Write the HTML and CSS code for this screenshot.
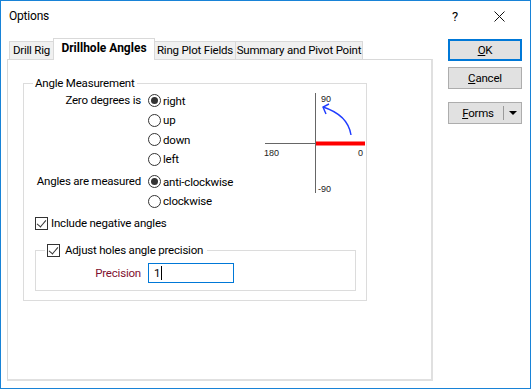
FILE: index.html
```html
<!DOCTYPE html>
<html lang="en">

<head>
    <meta charset="UTF-8">
    <title>Options</title>
    <link rel="stylesheet" href="styles.css">
</head>

<body>
    <div class="window">
        <div class="titlebar">
            <span class="title">Options</span>
            <span class="help">?</span>
            <svg class="close" width="11" height="11" viewBox="0 0 11 11">
                <path d="M0.5 0.5 L10.5 10.5 M10.5 0.5 L0.5 10.5" stroke="#111" stroke-width="1" fill="none" />
            </svg>
        </div>

        <div class="content">
            <div class="tabs">
                <div class="tabstrip">
                    <span class="tab tab-rig">Drill Rig</span>
                    <span class="tab tab-angles active">Drillhole Angles</span>
                    <span class="tab tab-ring">Ring Plot Fields</span>
                    <span class="tab tab-summary">Summary and Pivot Point</span>
                </div>

                <div class="panel">
                    <fieldset class="group">
                        <legend>Angle Measurement</legend>

                        <div class="measure">
                            <div class="options">
                                <div class="row">
                                    <span class="label">Zero degrees is</span>
                                    <div class="radios">
                                        <div class="radio checked"><span class="dot"></span>right</div>
                                        <div class="radio"><span class="dot"></span>up</div>
                                        <div class="radio"><span class="dot"></span>down</div>
                                        <div class="radio"><span class="dot"></span>left</div>
                                    </div>
                                </div>
                                <div class="row second">
                                    <span class="label">Angles are measured</span>
                                    <div class="radios">
                                        <div class="radio checked"><span class="dot"></span>anti-clockwise</div>
                                        <div class="radio"><span class="dot"></span>clockwise</div>
                                    </div>
                                </div>
                            </div>

                            <!-- angle diagram -->
                            <svg class="diagram" width="110" height="110" viewBox="0 0 110 110">
                                <line x1="59.5" y1="5" x2="59.5" y2="105" stroke="#666" stroke-width="1" />
                                <line x1="9" y1="55.5" x2="109" y2="55.5" stroke="#666" stroke-width="1" />
                                <line x1="60" y1="55.5" x2="109" y2="55.5" stroke="#ff0000" stroke-width="4" />
                                <path d="M95 47 Q92 27 67 19" stroke="#1f3cff" stroke-width="1.4" fill="none" />
                                <path d="M73 16 L67 19 L70 26" stroke="#1f3cff" stroke-width="1.4" fill="none" />
                                <text x="65" y="14">90</text>
                                <text x="8" y="68">180</text>
                                <text x="102" y="68">0</text>
                                <text x="62" y="104">-90</text>
                            </svg>
                        </div>

                        <div class="check negative"><span class="box"></span>Include negative angles</div>

                        <fieldset class="subgroup">
                            <legend>
                                <div class="check"><span class="box"></span>Adjust holes angle precision</div>
                            </legend>
                            <div class="precision">
                                <span class="label">Precision</span>
                                <div class="input">1<span class="caret"></span></div>
                            </div>
                        </fieldset>
                    </fieldset>
                </div>
            </div>

            <div class="buttons">
                <div class="btn default"><u>O</u>K</div>
                <div class="btn"><u>C</u>ancel</div>
                <div class="btn forms">
                    <span class="forms-text"><u>F</u>orms</span>
                    <span class="sep"></span>
                    <span class="arrow"></span>
                </div>
            </div>
        </div>
    </div>
</body>

</html>
```

FILE: styles.css
```css
* {
    margin: 0;
    padding: 0;
    box-sizing: border-box;
}

body {
    background-color: #fff;
    font-family: Roboto, "Noto Sans", sans-serif;
    font-size: 11.5px;
    letter-spacing: -0.2px;
    color: #000;
}

.window {
    width: 531px;
    height: 389px;
    border: 1px solid #1883d7;
    background-color: #fff;
}

.titlebar {
    height: 30px;
    display: flex;
    align-items: center;
    padding-left: 8px;
}

.title {
    flex: 1;
    font-size: 12px;
}

.help {
    font-size: 13px;
    margin-right: 36px;
}

.close {
    margin-right: 25px;
}

.content {
    display: flex;
    padding-top: 7px;
    padding-left: 6px;
}

.tabs {
    width: 426px;
}

.tabstrip {
    display: flex;
    align-items: flex-end;
    height: 21px;
    padding-left: 2px;
}

.tab {
    height: 18px;
    line-height: 17px;
    text-align: center;
    background-color: #f0f0f0;
    border: 1px solid #d9d9d9;
    border-bottom: none;
    margin-left: -1px;
    white-space: nowrap;
}

.tab-rig {
    width: 45px;
    margin-left: 0;
}

.tab-angles {
    width: 102px;
}

.tab-ring {
    width: 82px;
}

.tab-summary {
    width: 128px;
}

.tab.active {
    height: 22px;
    line-height: 19px;
    margin-bottom: -1px;
    background-color: #fff;
    font-weight: bold;
    font-size: 12px;
    letter-spacing: 0;
    position: relative;
    z-index: 1;
}

.panel {
    height: 322px;
    border: 1px solid #d9d9d9;
    border-right: 2px solid #e0e0e0;
    border-bottom: 2px solid #e0e0e0;
    padding-left: 15px;
    padding-top: 15px;
}

fieldset {
    border: 1px solid #dcdcdc;
}

legend {
    line-height: 16px;
    padding: 0 2px;
}

.group {
    width: 343px;
    height: 226px;
}

.group > legend {
    margin-left: 9px;
}

.measure {
    display: flex;
}

.options {
    width: 232px;
}

.row {
    display: flex;
}

.row.second {
    margin-top: 3px;
}

.label {
    text-align: right;
    white-space: nowrap;
}

.row .label {
    width: 117px;
    margin-right: 7px;
    line-height: 19.5px;
}

.radio {
    height: 19.5px;
    display: flex;
    align-items: center;
    white-space: nowrap;
}

.radio .dot {
    width: 13px;
    height: 13px;
    border: 1px solid #333;
    border-radius: 50%;
    margin-right: 2px;
    display: flex;
    align-items: center;
    justify-content: center;
    background-color: #fff;
}

.radio.checked .dot::after {
    content: "";
    width: 7px;
    height: 7px;
    border-radius: 50%;
    background-color: #333;
}

.diagram {
    margin-top: -3px;
    font-family: "Liberation Sans", Arial, sans-serif;
    font-size: 9px;
    letter-spacing: 0;
    fill: #222;
}

.check {
    display: flex;
    align-items: center;
    height: 20px;
    white-space: nowrap;
}

.check .box {
    width: 13px;
    height: 13px;
    border: 1px solid #333;
    margin-right: 5px;
    background-color: #fff;
    position: relative;
}

.check .box::after {
    content: "";
    position: absolute;
    left: 3px;
    top: 0px;
    width: 4px;
    height: 8px;
    border-right: 1px solid #333;
    border-bottom: 1px solid #333;
    transform: rotate(40deg);
}

.negative {
    margin-top: 2px;
    margin-left: 11px;
}

.negative .box {
    margin-right: 3px;
}

.subgroup {
    width: 321px;
    height: 51px;
    margin-top: 7px;
    margin-left: 11px;
}

.subgroup > legend {
    margin-left: 9px;
    padding: 0 4px 0 2px;
}

.precision {
    display: flex;
    align-items: center;
    padding-top: 3px;
}

.precision .label {
    width: 105px;
    margin-right: 7px;
    color: #7f1030;
}

.input {
    width: 86px;
    height: 20px;
    border: 1px solid #0078d7;
    padding-left: 5px;
    line-height: 18px;
    display: flex;
    align-items: center;
}

.caret {
    width: 1px;
    height: 14px;
    background-color: #000;
    margin-left: 1px;
}

.buttons {
    margin-left: 15px;
    padding-top: 1px;
    width: 74px;
}

.btn {
    height: 22px;
    line-height: 20px;
    text-align: center;
    background-color: #e1e1e1;
    border: 1px solid #adadad;
    margin-bottom: 6px;
}

.btn.default {
    border: 2px solid #0078d7;
    line-height: 18px;
}

.btn.forms {
    margin-top: 13px;
    display: flex;
    align-items: center;
}

.forms-text {
    width: 54px;
    padding-left: 4px;
}

.sep {
    width: 1px;
    height: 14px;
    background-color: #9a9a9a;
}

.arrow {
    margin-left: 5px;
    width: 0;
    height: 0;
    border-left: 4px solid transparent;
    border-right: 4px solid transparent;
    border-top: 4px solid #000;
}
```
